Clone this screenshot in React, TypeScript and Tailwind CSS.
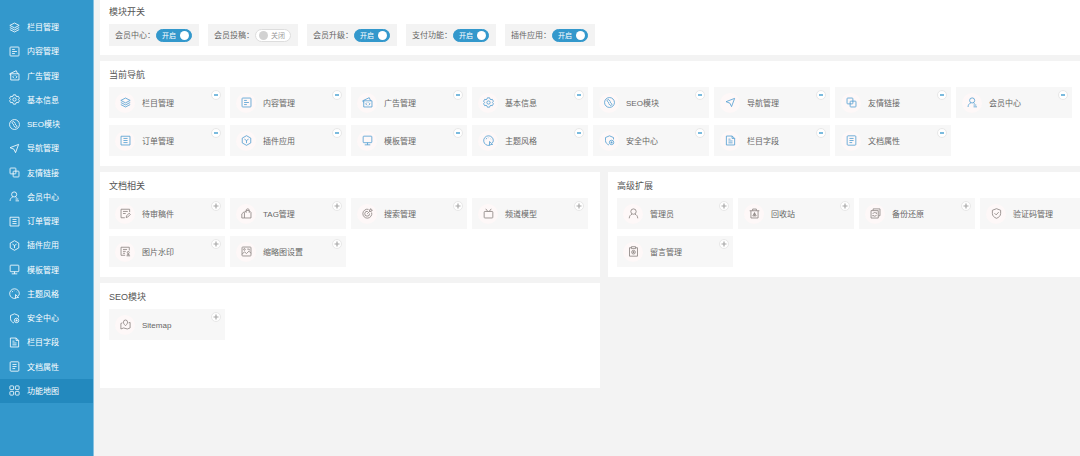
import { useState } from "react";
import type { ReactNode } from "react";

const icons: Record<string, ReactNode> = {
  layers: (
    <>
      <path d="M8 1.5 14.8 5 8 8.5 1.2 5Z" />
      <path d="M1.2 8 8 11.5 14.8 8M1.2 11 8 14.5 14.8 11" />
    </>
  ),
  content: (
    <>
      <rect x="1.5" y="1.5" width="13" height="13" rx="1" />
      <path d="M4.5 5h4M4.5 8h7M4.5 11h4" />
    </>
  ),
  ad: (
    <>
      <path d="M2.5 5.5h12v9h-12ZM2.5 8 1 5.5 10.5 1l2 4.5" />
      <path d="m7.3 8-2 2 2 2M9.700 8l2 2-2 2" />
    </>
  ),
  gear: (
    <>
      <path d="M6.4 1.2h3.2l.6 1.9 1.4.8 2-.5 1.5 2.8L13.7 8l1.4 1.8-1.5 2.8-2-.5-1.4.8-.6 1.9H6.4l-.6-1.9-1.4-.8-2 .5L.9 9.8 2.3 8 .9 6.2l1.5-2.8 2 .5 1.4-.8Z" />
      <circle cx="8" cy="8" r="2.4" />
    </>
  ),
  seo: (
    <>
      <circle cx="8" cy="8" r="7.2" />
      <path d="M7.6 8.8 5 6.5a1.6 1.6 0 1 1 2.3-2.3l2.2 2.4M8.4 7.2l2.6 2.3a1.6 1.6 0 1 1-2.3 2.3L6.5 9.4" />
    </>
  ),
  nav: <path d="M14 2 9.5 14 7.2 9 1.5 6.8Z" />,
  link: (
    <>
      <rect x="1.5" y="1.5" width="8.5" height="8.5" rx="1" />
      <rect x="6" y="6" width="8.5" height="8.5" rx="1" />
    </>
  ),
  member: (
    <>
      <circle cx="7.5" cy="5" r="3.7" />
      <path d="M1.5 14.5c.2-3.2 1.8-5.1 4-5.8M9.5 8.7c.8.3 1.3.7 1.8 1.3M9.5 11.7h4M9.5 14.3h5" />
    </>
  ),
  order: (
    <>
      <rect x="1.5" y="1.8" width="13" height="12.7" />
      <path d="M5 5h6M5 8h6M5 11h6" />
    </>
  ),
  plugin: (
    <>
      <path d="m8 1 6.2 3.5v7L8 15l-6.2-3.5v-7Z" />
      <path d="m5 6 3 2 3-2M8 8v3.8" />
    </>
  ),
  monitor: (
    <>
      <rect x="1.7" y="1.7" width="12.6" height="9.500" rx="1" />
      <path d="M8 11.200v3.100M4 14.300h8" />
    </>
  ),
  theme: (
    <>
      <path d="M9.500 15A7 7 0 1 1 15 8.500c0 1.500-1 2.500-1.800 3.200" />
      <path d="M4.200 6 6 4.500M8 4h.5M11.200 5.800l.6.600M9.500 15V9.500l4.500 4.200-2.500.2Z" />
    </>
  ),
  shield: (
    <>
      <path d="M13.8 6.5V3.7L8 1.2 2.2 3.7v4.5c0 3 2 5 5 6.3" />
      <circle cx="11" cy="10.8" r="3.2" />
      <path d="M11 9.3v3M9.5 10.8h3" />
    </>
  ),
  field: (
    <>
      <path d="M2 1.5h8.5L14 5v9.5H2ZM10.3 1.5V5H14" />
      <path d="M5 6h3M5 8.7h6M5 11.4h6" />
    </>
  ),
  doc: (
    <>
      <rect x="1.7" y="1.2" width="12.6" height="13.6" rx="1.2" />
      <path d="M5 5h6M5 8h6M5 11h4" />
    </>
  ),
  map: (
    <>
      <rect x="1.3" y="1.3" width="5.4" height="5.4" rx="1" />
      <rect x="9.3" y="1.3" width="5.4" height="5.4" rx="1" />
      <rect x="1.3" y="9.3" width="5.4" height="5.4" rx="1" />
      <rect x="9.3" y="9.3" width="5.4" height="5.4" rx="1" />
    </>
  ),
  draft: (
    <>
      <path d="M14 6V1.8H1.5v12.4H7M4.3 5h7M4.3 8h4" />
      <path d="m9 14 .5-2.6L13.3 7.5l1.700 1.800-3.800 3.900Z" />
    </>
  ),
  tag: (
    <>
      <path d="M5 14.5V6.500L8 3.500h3.500L14.500 6.500v8ZM5 5 1.200 8.500v6H5" />
      <path d="M7.500 7V3.500c0-3 4.500-3 4.500 0V7" />
    </>
  ),
  search: (
    <>
      <path d="M9.5 2A6.5 6.5 0 1 0 14 6.5" />
      <path d="M8.5 5A3.5 3.5 0 1 0 11 8M7.5 8.5 11 5V2.5L13 1v2h2l-1.5 2H11" />
    </>
  ),
  channel: (
    <>
      <rect x="1.7" y="5" width="12.6" height="9.500" rx="1" />
      <path d="M4 1.200 7 5M12 1.200 9 5" />
    </>
  ),
  watermark: (
    <>
      <path d="M13.5 6.5V1.8H1.5v11.7h6M4.3 5h6M4.3 7.8h4M4.3 10.6h3" />
      <circle cx="12" cy="9.5" r="1.5" />
      <path d="M12 11v2M9.5 14.3h5.2M10 12.8h4" />
    </>
  ),
  image: (
    <>
      <rect x="1.5" y="1.5" width="13" height="13" rx="1" />
      <path d="M1.5 12 5 8.5l3 2.5 3.5-3.5 3 3" />
      <circle cx="5" cy="5" r="1.2" />
      <path d="M9 4.5h3v2" />
    </>
  ),
  admin: (
    <>
      <circle cx="8" cy="5.2" r="3.9" />
      <path d="M1.8 15c.2-3.4 1.8-5.2 4-6M14.2 15c-.2-3.4-1.8-5.2-4-6" />
    </>
  ),
  trash: (
    <>
      <path d="M1 4h14M5.3 4V1.5h5.4V4M2.8 4v10.5h10.4V4" />
      <path d="m8 6.8-2.5 4.7h5ZM8 6.8v4.7" />
    </>
  ),
  backup: (
    <>
      <path d="M4.5 3.5V1.3h10v10h-2.2" />
      <rect x="1.5" y="3.8" width="10.5" height="10.8" />
      <path d="M4 8.5c1-2.5 4.5-2.5 5.5-.3V6.5M9.7 10c-1 2.5-4.5 2.5-5.5.3V12" />
    </>
  ),
  verify: (
    <>
      <path d="m8 1 6 2.3V8c0 3.5-2.5 5.6-6 7-3.5-1.4-6-3.5-6-7V3.3Z" />
      <path d="m5 7.5 2.5 2.5L11.2 6" />
    </>
  ),
  message: (
    <>
      <path d="M5 2.5H2.2v12.3h11.6V2.5H11" />
      <path d="M5 1h6v2.8H5Z" />
      <circle cx="8" cy="9" r="2.7" />
      <path d="M6.5 9h3M8 7.5v3" />
    </>
  ),
  sitemap: (
    <>
      <path d="M8 9.8C5.8 7.5 5 6.3 5 4.5a3 3 0 0 1 6 0c0 1.8-.8 3-3 5.3Z" />
      <path d="M3.500 5.500 1.300 6.500v8l4-1.500 5.400 1.500 4-1.500v-8L12.500 5.500" />
    </>
  ),
};

const currentNav = [
  { icon: "layers", label: "栏目管理" },
  { icon: "content", label: "内容管理" },
  { icon: "ad", label: "广告管理" },
  { icon: "gear", label: "基本信息" },
  { icon: "seo", label: "SEO模块" },
  { icon: "nav", label: "导航管理" },
  { icon: "link", label: "友情链接" },
  { icon: "member", label: "会员中心" },
  { icon: "order", label: "订单管理" },
  { icon: "plugin", label: "插件应用" },
  { icon: "monitor", label: "模板管理" },
  { icon: "theme", label: "主题风格" },
  { icon: "shield", label: "安全中心" },
  { icon: "field", label: "栏目字段" },
  { icon: "doc", label: "文档属性" },
];

const documentItems = [
  { icon: "draft", label: "待审稿件" },
  { icon: "tag", label: "TAG管理" },
  { icon: "search", label: "搜索管理" },
  { icon: "channel", label: "频道模型" },
  { icon: "watermark", label: "图片水印" },
  { icon: "image", label: "缩略图设置" },
];

const advancedItems = [
  { icon: "admin", label: "管理员" },
  { icon: "trash", label: "回收站" },
  { icon: "backup", label: "备份还原" },
  { icon: "verify", label: "验证码管理" },
  { icon: "message", label: "留言管理" },
];

const seoItems = [{ icon: "sitemap", label: "Sitemap" }];

const modules = [
  { label: "会员中心", enabled: true },
  { label: "会员投稿", enabled: false },
  { label: "会员升级", enabled: true },
  { label: "支付功能", enabled: true },
  { label: "插件应用", enabled: true },
];

function Icon({ name }: { name: string }) {
  return (
    <svg
      viewBox="0 0 16 16"
      fill="none"
      stroke="currentColor"
      strokeWidth="1.2"
      strokeLinejoin="round"
      className="size-[11px] shrink-0"
      aria-hidden="true"
    >
      {icons[name]}
    </svg>
  );
}

function Sidebar() {
  return (
    <aside className="w-[94px] shrink-0 border-r border-[#85c1e1] bg-[#3398cc] pt-[15px]">
      <nav className="flex h-[388px] flex-col">
        {[...currentNav, { icon: "map", label: "功能地图" }].map((item) => (
          <a
            key={item.label}
            href="#"
            className={`flex flex-1 items-center gap-[7px] pl-[9px] text-white ${
              item.icon === "map" ? "bg-[#2389be]" : ""
            }`}
          >
            <Icon name={item.icon} />
            <span className="pt-[2px]">{item.label}</span>
          </a>
        ))}
      </nav>
    </aside>
  );
}

function ModuleSwitch({ label, enabled }: { label: string; enabled: boolean }) {
  const [on, setOn] = useState(enabled);

  return (
    <label className="flex h-[22px] w-[90px] items-center justify-between bg-[#f3f3f3] pr-[7px] pl-[6px]">
      <span className="pt-[2px]">{label}：</span>
      <input
        type="checkbox"
        checked={on}
        onChange={() => setOn(!on)}
        className="sr-only"
      />
      <span
        className={`flex h-[13px] w-[36px] shrink-0 items-center justify-between rounded-full border ${
          on
            ? "flex-row-reverse border-[#3398cc] bg-[#3398cc] pr-[2px] pl-[5px] text-white"
            : "border-[#dddddd] bg-white pr-[5px] pl-[3px] text-[#999999]"
        }`}
      >
        <span
          className={`size-[9px] rounded-full ${on ? "bg-white" : "bg-[#d2d2d2]"}`}
        />
        <span className="pt-px text-[7px]">{on ? "开启" : "关闭"}</span>
      </span>
    </label>
  );
}

function Card({
  icon,
  label,
  added,
}: {
  icon: string;
  label: string;
  added?: boolean;
}) {
  return (
    <div className="relative h-[31px] bg-[#f7f7f7]">
      <a href="#" className="flex h-full items-center gap-[7px] pl-[6px]">
        <span
          className={`flex size-5 items-center justify-center rounded-full bg-[#fef8f8] ${
            added ? "text-[#559fd2]" : "text-[#8c8482]"
          }`}
        >
          <Icon name={icon} />
        </span>
        <span className="pt-[2px]">{label}</span>
      </a>
      <button
        type="button"
        aria-label={added ? `移除${label}` : `添加${label}`}
        className={`absolute top-[3px] right-[4px] flex size-[10px] items-center justify-center rounded-full border border-[#e8e8e8] bg-white ${
          added ? "text-[#5aaad6]" : "text-[#a8a8a8]"
        }`}
      >
        <svg viewBox="0 0 8 8" stroke="currentColor" className="size-2 shrink-0">
          {added ? (
            <path d="M2 4h4" strokeWidth="1.6" />
          ) : (
            <path d="M1.5 4h5M4 1.5v5" strokeWidth="1.2" />
          )}
        </svg>
      </button>
    </div>
  );
}

function Panel({ title, children }: { title: string; children: ReactNode }) {
  return (
    <section className="min-h-[105px] bg-white px-[9px] pt-[7px] pb-[10px]">
      <h2 className="mb-[5px] text-[9px] leading-[14px] text-[#555555]">
        {title}
      </h2>
      {children}
    </section>
  );
}

function CardGrid({
  items,
  added,
}: {
  items: { icon: string; label: string }[];
  added?: boolean;
}) {
  return (
    <div
      className={`grid gap-x-[5px] gap-y-[7px] ${
        added
          ? "grid-cols-[repeat(8,116px)]"
          : "grid-cols-[repeat(4,116px)]"
      }`}
    >
      {items.map((item) => (
        <Card key={item.label} {...item} added={added} />
      ))}
    </div>
  );
}

export default function App() {
  return (
    <div className="flex min-h-screen bg-[#f3f3f3] font-['Liberation_Sans','Noto_Sans_CJK_SC',sans-serif] text-[8px] leading-3 text-[#666666]">
      <Sidebar />

      <main className="min-w-0 flex-1 overflow-hidden pl-[6px]">
        <div className="-mr-[28px] flex flex-col gap-[6px]">
          <section className="bg-white px-[9px] pt-[5px] pb-[9px]">
            <h2 className="mb-[5px] text-[9px] leading-[14px] text-[#555555]">
              模块开关
            </h2>
            <div className="flex gap-[9px]">
              {modules.map((item) => (
                <ModuleSwitch key={item.label} {...item} />
              ))}
            </div>
          </section>

          <Panel title="当前导航">
            <CardGrid items={currentNav} added />
          </Panel>

          <div className="grid grid-cols-2 gap-x-[8px] gap-y-[6px]">
            <Panel title="文档相关">
              <CardGrid items={documentItems} />
            </Panel>

            <Panel title="高级扩展">
              <CardGrid items={advancedItems} />
            </Panel>

            <Panel title="SEO模块">
              <CardGrid items={seoItems} />
            </Panel>
          </div>
        </div>
      </main>
    </div>
  );
}
